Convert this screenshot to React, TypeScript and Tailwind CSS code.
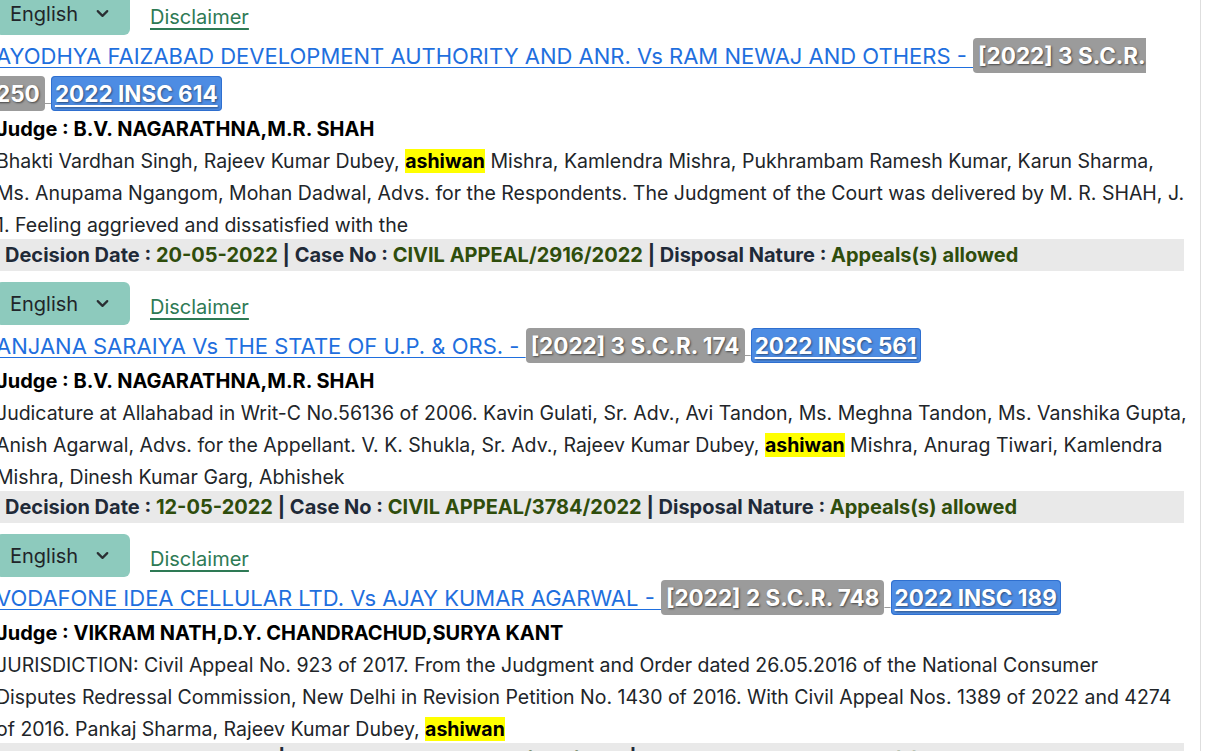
import React from "react";
import { ChevronDown } from "lucide-react";

type Item = {
  title: string;
  scr: string;
  insc: string;
  judge: string;
  lines: React.ReactNode[];
  date: string;
  caseNo: string;
  nature: string;
};

const Hl = () => <span className="bg-[#ffff00] font-bold text-black">ashiwan</span>;

const items: Item[] = [
  {
    title: "AYODHYA FAIZABAD DEVELOPMENT AUTHORITY AND ANR. Vs RAM NEWAJ AND OTHERS - ",
    scr: "[2022] 3 S.C.R. 250",
    insc: "2022 INSC 614",
    judge: "B.V. NAGARATHNA,M.R. SHAH",
    lines: [
      <>Bhakti Vardhan Singh, Rajeev Kumar Dubey, <Hl /> Mishra, Kamlendra Mishra, Pukhrambam Ramesh Kumar, Karun Sharma,</>,
      <>Ms. Anupama Ngangom, Mohan Dadwal, Advs. for the Respondents. The Judgment of the Court was delivered by M. R. SHAH, J.</>,
      <>1. Feeling aggrieved and dissatisfied with the</>,
    ],
    date: "20-05-2022",
    caseNo: "CIVIL APPEAL/2916/2022",
    nature: "Appeals(s) allowed",
  },
  {
    title: "ANJANA SARAIYA Vs THE STATE OF U.P. & ORS. - ",
    scr: "[2022] 3 S.C.R. 174",
    insc: "2022 INSC 561",
    judge: "B.V. NAGARATHNA,M.R. SHAH",
    lines: [
      <>Judicature at Allahabad in Writ-C No.56136 of 2006. Kavin Gulati, Sr. Adv., Avi Tandon, Ms. Meghna Tandon, Ms. Vanshika Gupta,</>,
      <>Anish Agarwal, Advs. for the Appellant. V. K. Shukla, Sr. Adv., Rajeev Kumar Dubey, <Hl /> Mishra, Anurag Tiwari, Kamlendra</>,
      <>Mishra, Dinesh Kumar Garg, Abhishek</>,
    ],
    date: "12-05-2022",
    caseNo: "CIVIL APPEAL/3784/2022",
    nature: "Appeals(s) allowed",
  },
  {
    title: "VODAFONE IDEA CELLULAR LTD. Vs AJAY KUMAR AGARWAL - ",
    scr: "[2022] 2 S.C.R. 748",
    insc: "2022 INSC 189",
    judge: "VIKRAM NATH,D.Y. CHANDRACHUD,SURYA KANT",
    lines: [
      <>JURISDICTION: Civil Appeal No. 923 of 2017. From the Judgment and Order dated 26.05.2016 of the National Consumer</>,
      <>Disputes Redressal Commission, New Delhi in Revision Petition No. 1430 of 2016. With Civil Appeal Nos. 1389 of 2022 and 4274</>,
      <>of 2016. Pankaj Sharma, Rajeev Kumar Dubey, <Hl /></>,
    ],
    date: "16-02-2022",
    caseNo: "CIVIL APPEAL/923/2017",
    nature: "Appeals(s) allowed",
  },
];

function Entry({ it }: { it: Item }) {
  return (
    <div className="mb-[11px]">
      <div className="flex items-center gap-[20px]">
        <button className="flex h-[43px] w-[134px] items-center rounded-[6px] bg-[#8dcabd] pl-[14px] text-[20px] text-[#212529]">
          <span>English</span>
          <ChevronDown className="ml-[15px] h-[19px] w-[19px] text-[#2a2f33]" strokeWidth={2.8} />
        </button>
        <a href="#" className="mt-[6px] text-[20px] text-[#2e7a55] underline underline-offset-[4px]">
          Disclaimer
        </a>
      </div>
      <div className="mt-[2px] text-[22px] leading-[38px]">
        <a href="#" className="text-[#1f6fde] underline underline-offset-[3px] decoration-[1px]">
          {it.title}
        </a>
        <span className="rounded-[4px] bg-[#9b9b9b] px-[5px] py-[4px] text-[22.5px] font-bold text-white [text-shadow:1px_1px_2px_rgba(0,0,0,0.55)]">
          {it.scr}
        </span>
        <a href="#" className="text-[#9b9b9b] underline decoration-[1px]">
          {" "}
        </a>
        <a
          href="#"
          className="rounded-[4px] border border-[#2f6fcf] bg-[#4d8ce3] px-[3px] py-[3px] text-[22.5px] font-bold text-white underline underline-offset-[3px] [text-shadow:1px_1px_2px_rgba(0,0,0,0.45)]"
        >
          {it.insc}
        </a>
      </div>
      <div className="text-[20px] font-bold leading-[32px] text-black">Judge : {it.judge}</div>
      <div className="text-[19.5px] leading-[32px] text-[#212529]">
        {it.lines.map((l, i) => (
          <div key={i} className="whitespace-nowrap">
            {l}
          </div>
        ))}
      </div>
      <div className="-mt-[2px] bg-[#e9e9e9] px-[9px] text-[20px] font-bold leading-[32px] text-[#1f2a38]">
        Decision Date : <span className="text-[#2f4d0c]">{it.date}</span> | Case No :{" "}
        <span className="text-[#2f4d0c]">{it.caseNo}</span> | Disposal Nature :{" "}
        <span className="text-[#2f4d0c]">{it.nature}</span>
      </div>
    </div>
  );
}

export default function App() {
  return (
    <div className="h-[751px] overflow-hidden bg-white font-['Inter',sans-serif]">
      <div className="-ml-[4px] -mt-[8px] w-[1205px] min-h-[800px] border-r border-[#dedede] pr-[16px]">
        {items.map((it) => (
          <Entry key={it.insc} it={it} />
        ))}
      </div>
    </div>
  );
}
